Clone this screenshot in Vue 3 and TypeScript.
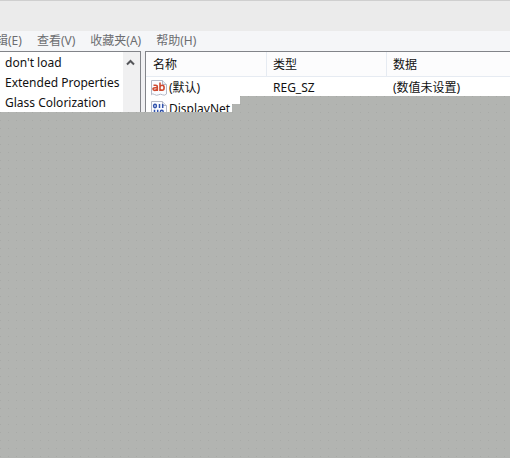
<script setup lang="ts">
interface RegistryValue {
  name: string
  type: string
  data: string
  kind: 'text' | 'binary'
}

const menus: string[] = ['编辑(E)', '查看(V)', '收藏夹(A)', '帮助(H)']
const keys: string[] = ["don't load", 'Extended Properties', 'Glass Colorization']
const columns: string[] = ['名称', '类型', '数据']
const values: RegistryValue[] = [
  { name: '(默认)', type: 'REG_SZ', data: '(数值未设置)', kind: 'text' },
  { name: 'DisplayNet', type: '', data: '', kind: 'binary' },
]
</script>

<template>
  <div class="window">
    <header class="titlebar"></header>
    <nav class="menubar">
      <button v-for="menu in menus" :key="menu" type="button">{{ menu }}</button>
    </nav>
    <main class="panes">
      <section class="tree">
        <ul>
          <li v-for="key in keys" :key="key">{{ key }}</li>
        </ul>
        <div class="scrollbar">
          <button type="button" aria-label="Scroll up">
            <svg width="9" height="7" viewBox="0 0 9 7">
              <path d="M1 5.5 4.5 2 8 5.5" fill="none" stroke="#55565a" stroke-width="2" />
            </svg>
          </button>
        </div>
      </section>
      <section class="list">
        <table>
          <thead>
            <tr>
              <th v-for="column in columns" :key="column" scope="col">{{ column }}</th>
            </tr>
          </thead>
          <tbody>
            <tr v-for="value in values" :key="value.name">
              <td>
                <span class="name">
                  <svg width="16" height="16" viewBox="0 0 16 16">
                    <path d="M.5.5h11l4 4v9.5q-2 2-4 .8t-4 0-4-.3-3 .3z" fill="#fbfcff" stroke="#b4b9c6" />
                    <path d="M11.5.5v4h4" fill="#e8ebf2" stroke="#b4b9c6" />
                    <g v-if="value.kind === 'text'" fill="none" stroke="#cf4a30" stroke-width="1.6">
                      <path d="M2.5 5.3h2q1.8 0 1.8 1.6v4.1M6.3 7.8H4q-2 0-2 1.3t1.8 1.3q1.8 0 2.5-1.2" />
                      <path d="M9 2.5v8.5M9 6.7q.8-1.4 2.2-1.4 1.9 0 1.9 2.5t-1.9 2.5Q9.8 10.3 9 9.3" />
                    </g>
                    <g v-else fill="none" stroke="#3153ad" stroke-width="1.5">
                      <ellipse cx="4" cy="5" rx="1.4" ry="1.7" />
                      <path d="M8.5 3v4M11.7 3v4" />
                      <path d="M3.5 8.7v4.6M6.7 8.7v4.6" />
                      <ellipse cx="10.8" cy="11" rx="1.4" ry="1.7" />
                    </g>
                  </svg>
                  {{ value.name }}
                </span>
              </td>
              <td>{{ value.type }}</td>
              <td>{{ value.data }}</td>
            </tr>
          </tbody>
        </table>
      </section>
    </main>
    <div class="cover"></div>
  </div>
</template>

<style>
body {
  margin: 0;
}
</style>

<style scoped>
.window {
  display: flex;
  flex-direction: column;
  min-height: 100vh;
  overflow: hidden;
  background: #f0f0f2;
  color: #111;
  font: 12px/20px "Noto Sans", "Noto Sans CJK SC", sans-serif;
}
.titlebar {
  box-sizing: border-box;
  height: 31px;
  border-top: 1px solid #cfcfcf;
  background: #ebebeb;
}
.menubar {
  display: flex;
  gap: 1px;
  height: 20px;
  margin-left: -23px;
  background: #f5f6f8;
}
.menubar button {
  padding: 0 7px;
  border: 0;
  background: none;
  color: #6c6d70;
  font: inherit;
  white-space: nowrap;
}
.panes {
  display: flex;
  gap: 4px;
  height: 61px;
  overflow: hidden;
}
.tree {
  box-sizing: border-box;
  display: flex;
  flex: 0 0 141px;
  border: solid #828489;
  border-width: 1px 1px 0 0;
  background: #fff;
}
ul {
  flex: 1;
  min-width: 0;
  margin: 0;
  padding: 1px 0 0 5px;
  overflow: hidden;
  list-style: none;
  white-space: nowrap;
}
.scrollbar {
  flex: 0 0 17px;
  background: #f0f0f1;
}
.scrollbar button {
  display: grid;
  place-items: center;
  width: 100%;
  height: 20px;
  padding: 0 2px 0 0;
  border: 0;
  background: none;
}
.list {
  flex: 1;
  min-width: 0;
  border: solid #828489;
  border-width: 1px 0 0 1px;
  background: #fff;
}
table {
  width: 100%;
  border-collapse: separate;
  border-spacing: 0;
  table-layout: fixed;
}
th,
td {
  box-sizing: border-box;
  padding: 0 0 0 7px;
  text-align: left;
  font-weight: 400;
  white-space: nowrap;
}
th {
  height: 25px;
  padding: 2px 0 0 6px;
  border: solid #e6ebf2;
  border-width: 0 0 1px 1px;
  background: #fcfcfd;
}
th:first-child {
  width: 120px;
  padding-left: 7px;
  border-left: 0;
}
th:nth-child(2) {
  width: 120px;
}
td {
  height: 21px;
}
td:first-child {
  padding-left: 5px;
}
.name {
  display: flex;
  align-items: center;
  gap: 2px;
}
.cover {
  z-index: 1;
  flex: 1;
  margin-top: -16px;
  background: radial-gradient(circle at 0 0, #a8aaa7 1px, transparent 1px) 0 0 / 8px 8px #b2b4b1;
  clip-path: polygon(0 16px, 232px 16px, 232px 8px, 240px 8px, 240px 0, 100% 0, 100% 100%, 0 100%);
}
</style>
